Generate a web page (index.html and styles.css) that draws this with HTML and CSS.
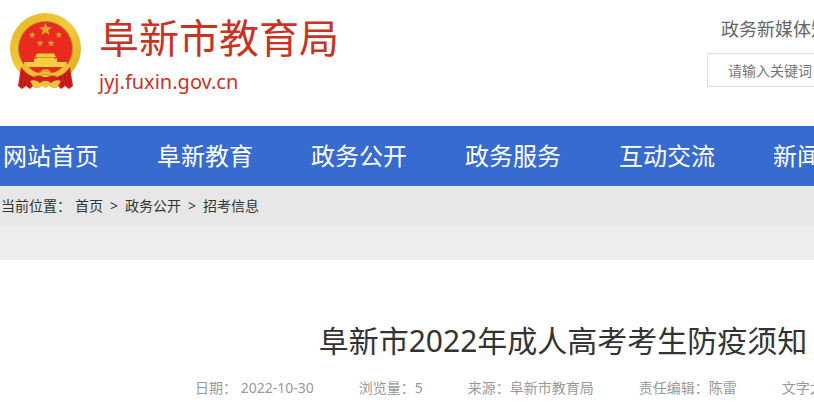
FILE: index.html
```html
<!DOCTYPE html>
<html lang="zh-CN">
<head>
  <meta charset="UTF-8">
  <meta name="viewport" content="width=device-width, initial-scale=1">
  <title>阜新市2022年成人高考考生防疫须知</title>
  <link rel="stylesheet" href="styles.css">
</head>
<body>
  <div class="page">
    <header class="header">
      <a class="logo" href="#">
        <svg class="emblem" viewBox="9 12 74 78" aria-hidden="true">
          <defs>
            <linearGradient id="gold" x1="0" y1="0" x2="1" y2="1">
              <stop offset="0" stop-color="#e6b422"/>
              <stop offset=".5" stop-color="#f3cb3c"/>
              <stop offset="1" stop-color="#dda51d"/>
            </linearGradient>
            <path id="star" d="M0-6 1.5-2H5.7L2.4.7 3.5 4.9 0 2.4-3.5 4.9-2.4.7-5.7-2H-1.5Z"/>
          </defs>
          <circle cx="45.5" cy="48.5" r="35.5" fill="url(#gold)"/>
          <circle cx="45.5" cy="48.5" r="27" fill="#ea2a1f" stroke="#b9851c"/>
          <g fill="#e3a22a">
            <use href="#star" transform="translate(45.5 29.5) scale(1.15)"/>
            <use href="#star" transform="translate(32.3 35) scale(.6)"/>
            <use href="#star" transform="translate(58.8 35) scale(.6)"/>
            <use href="#star" transform="translate(40 43.3) scale(.6)"/>
            <use href="#star" transform="translate(51 43.3) scale(.6)"/>
          </g>
          <!-- gate -->
          <path d="M37 53.5H54L56 57H35ZM37 57.5H54V58.5H57V62H67L66 67H25L24 62H34V58.5H37Z" fill="#f5cf3f"/>
          <path d="M36 57.3H55" stroke="#d39a22" stroke-width=".8"/>
          <!-- drapes -->
          <path d="M21 67Q30 73 39 76H52Q61 73 70 67L73 86 69 89 65 86 61 89 56 84H35L30 89 26 86 22 89 18 86Z" fill="#d3201b"/>
          <path d="M23 71 21 86M27 74 24 86M31 76 28 87M68 71 70 86M64 74 67 86M60 76 63 87" stroke="#a91512"/>
          <!-- knot and tassels -->
          <path d="M20 65 26 64Q32 72 39 73L43 69.5H48L52 73Q59 72 65 64L71 65Q66 74 57 77L51 75 48 77H43L40 75 34 77Q25 74 20 65Z" fill="#eec035"/>
          <path d="M39 73Q45.5 69 52 73M33 76Q45.5 73 58 76" fill="none" stroke="#c58d1d" stroke-width=".8"/>
          <path d="M30 81Q36 79 40 83L43 81H48L51 83Q55 79 61 81Q59 84 57 88H52L49 86 45.5 88 42 86 39 88H34Q32 84 30 81Z" fill="#f0c43b"/>
        </svg>
        <span class="logo-text">
          <span class="site-name">阜新市教育局</span>
          <span class="site-domain">jyj.fuxin.gov.cn</span>
        </span>
      </a>
      <div class="tools">
        <a class="media-link" href="#">政务新媒体矩</a>
        <form class="search">
          <input class="search-input" type="text" placeholder="请输入关键词" aria-label="请输入关键词">
        </form>
      </div>
    </header>

    <nav class="nav">
      <a href="#">网站首页</a>
      <a href="#">阜新教育</a>
      <a href="#">政务公开</a>
      <a href="#">政务服务</a>
      <a href="#">互动交流</a>
      <a href="#">新闻</a>
    </nav>

    <div class="breadcrumb">
      <span>当前位置：</span>
      <a href="#">首页</a>
      <span class="sep">&gt;</span>
      <a href="#">政务公开</a>
      <span class="sep">&gt;</span>
      <a href="#">招考信息</a>
    </div>

    <main class="main">
      <article class="article">
        <h1 class="title">阜新市2022年成人高考考生防疫须知</h1>
        <div class="meta">
          <span>日期： 2022-10-30</span>
          <span>浏览量：5</span>
          <span>来源：阜新市教育局</span>
          <span>责任编辑：陈雷</span>
          <span>文字大</span>
        </div>
      </article>
    </main>
  </div>
</body>
</html>
```
FILE: styles.css
```css
* {
  box-sizing: border-box;
}

body {
  margin: 0;
  background: #fff;
  color: #333;
  font-family: "Noto Sans", "Noto Sans CJK SC", sans-serif;
  font-size: 14px;
  overflow-x: hidden;
}

a {
  color: inherit;
  text-decoration: none;
}

/* desktop layout, narrower windows cut it off on the right */
.page {
  min-width: 1126px;
  overflow: hidden;
  white-space: nowrap;
}

.header {
  display: flex;
  justify-content: space-between;
  height: 126px;
  padding-left: 9px;
}

.logo {
  display: flex;
  gap: 16px;
  padding-top: 12px;
  color: #c9331f;
}

.emblem {
  width: 74px;
  height: 78px;
}

.logo-text {
  display: flex;
  flex-direction: column;
}

.site-name {
  font-size: 40px;
  line-height: 52px;
}

.site-domain {
  font-size: 20px;
  line-height: 36px;
}

.tools {
  width: 419px;
  padding-top: 16px;
}

.media-link {
  display: block;
  padding-left: 14px;
  color: #666;
  font-size: 18px;
  line-height: 26px;
}

.search {
  margin-top: 11px;
}

.search-input {
  width: 320px;
  height: 34px;
  padding: 0 20px;
  border: 1px solid #ddd;
  background: #fff;
  font-family: inherit;
  font-size: 14px;
}

.search-input::placeholder {
  color: #757575;
}

.nav {
  display: flex;
  gap: 58px;
  padding-left: 3px;
  background: #376bcf;
  color: #fff;
  font-size: 24px;
  line-height: 60px;
}

.breadcrumb {
  display: flex;
  gap: 4px;
  padding-left: 1px;
  background: #e7e7e7;
  line-height: 40px;
}

.sep {
  padding: 0 3px;
}

.main {
  padding-top: 34px;
  background: #ededed;
}

.article {
  padding-top: 56px;
  background: #fff;
}

.title {
  margin: 0;
  font-size: 30px;
  font-weight: normal;
  line-height: 50px;
  text-align: center;
}

.meta {
  display: flex;
  gap: 45px;
  padding: 11px 0 4px 195px;
  color: #999;
  line-height: 22px;
}
```
